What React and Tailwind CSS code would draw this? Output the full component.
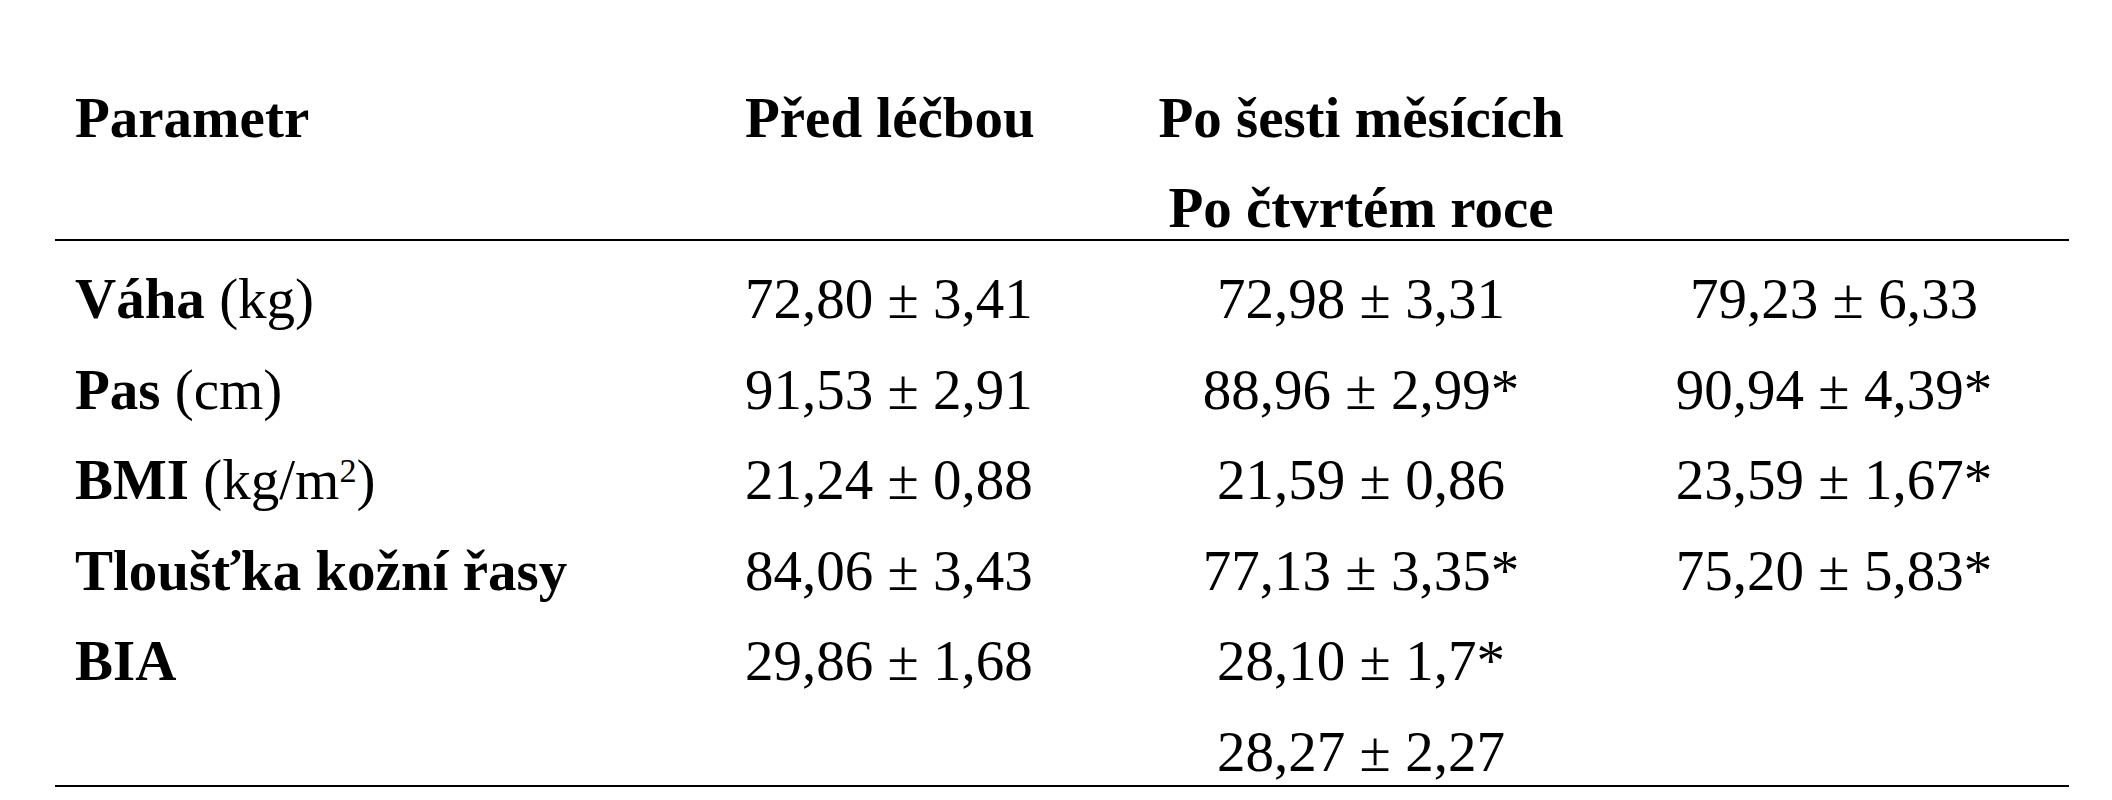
import React from 'react';

const rows = [
  { label: <><b>Váha</b> (kg)</>, before: '72,80 ± 3,41', six: '72,98 ± 3,31', four: '79,23 ± 6,33' },
  { label: <><b>Pas</b> (cm)</>, before: '91,53 ± 2,91', six: '88,96 ± 2,99*', four: '90,94 ± 4,39*' },
  { label: <><b>BMI</b> (kg/m<sup className="text-[0.6em]">2</sup>)</>, before: '21,24 ± 0,88', six: '21,59 ± 0,86', four: '23,59 ± 1,67*' },
  { label: <b>Tloušťka kožní řasy</b>, before: '84,06 ± 3,43', six: '77,13 ± 3,35*', four: '75,20 ± 5,83*' },
  { label: <b>BIA</b>, before: '29,86 ± 1,68', six: '28,10 ± 1,7*', four: '' },
  { label: '', before: '', six: '28,27 ± 2,27', four: '' },
];

const cols = 'grid grid-cols-[690px_378px_476px_470px]';

export default function App() {
  return (
    <div className="w-[2112px] h-[800px] bg-white text-black overflow-hidden font-['Liberation_Serif','Times_New_Roman',serif] text-[57px] leading-[63px]">
      <div className="ml-[55px] w-[2014px] pt-[86px]">
        {/* header */}
        <div className={`${cols} gap-y-[27px] font-bold border-b-2 border-black`}>
          <div className="pl-[20px]">Parametr</div>
          <div>Před léčbou</div>
          <div className="text-center whitespace-nowrap">Po šesti měsících</div>
          <div />
          <div />
          <div />
          <div className="text-center whitespace-nowrap">Po čtvrtém roce</div>
          <div />
        </div>

        {/* body */}
        <div className={`${cols} gap-y-[27.6px] pt-[26px] pb-[2px] border-b-2 border-black`}>
          {rows.map((r, i) => (
            <React.Fragment key={i}>
              <div className="pl-[20px] whitespace-nowrap">{r.label}</div>
              <div className="whitespace-nowrap">{r.before}</div>
              <div className="text-center whitespace-nowrap">{r.six}</div>
              <div className="text-center whitespace-nowrap">{r.four}</div>
            </React.Fragment>
          ))}
        </div>
      </div>
    </div>
  );
}
